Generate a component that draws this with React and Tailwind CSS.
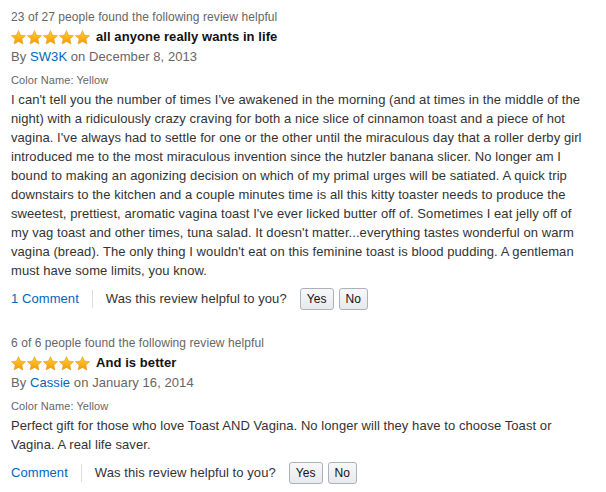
import React from "react";

function Star() {
  return (
    <svg width="15" height="15" viewBox="0 0 24 24" className="shrink-0">
      <defs>
        <linearGradient id="sg" x1="0" y1="0" x2="0" y2="1">
          <stop offset="0" stopColor="#ffce3d" />
          <stop offset="1" stopColor="#f39c00" />
        </linearGradient>
      </defs>
      <path
        d="M12 0.8l3.4 7.3 8 .9-6 5.4 1.7 7.9L12 18.3l-7.1 4 1.7-7.9-6-5.4 8-.9z"
        fill="url(#sg)"
        stroke="#e08a00"
        strokeWidth="0.7"
        strokeLinejoin="round"
      />
    </svg>
  );
}

function Review({ helpful, title, author, date, body, comment }) {
  return (
    <div>
      <div className="text-[12px] leading-[20px] text-[#666] pt-[1px]">{helpful}</div>
      <div className="flex items-center h-[20px]">
        <div className="flex gap-[1px]">
          <Star />
          <Star />
          <Star />
          <Star />
          <Star />
        </div>
        <span className="ml-[6px] text-[13px] font-bold text-[#111]">{title}</span>
      </div>
      <div className="text-[13px] leading-[20px] text-[#666]">
        By <span className="text-[#0066c0]">{author}</span> on {date}
      </div>
      <div className="mt-[5px] text-[11px] leading-[16px] text-[#666]">Color Name: Yellow</div>
      <p className="mt-[2px] text-[13px] leading-[19px] text-[#333]">{body}</p>
      <div className="mt-[8px] flex items-center h-[22px] text-[13px]">
        <span className="text-[#0066c0]">{comment}</span>
        <span className="mx-[13px] w-px h-[18px] bg-[#ddd]" />
        <span className="text-[#333]">Was this review helpful to you?</span>
        <button className="ml-[13px] h-[22px] px-[6px] rounded-[3px] border border-[#adb1b8] bg-gradient-to-b from-[#f7f8fa] to-[#e7e9ec] text-[12px] text-[#111] leading-none">
          Yes
        </button>
        <button className="ml-[5px] h-[22px] px-[6px] rounded-[3px] border border-[#adb1b8] bg-gradient-to-b from-[#f7f8fa] to-[#e7e9ec] text-[12px] text-[#111] leading-none">
          No
        </button>
      </div>
    </div>
  );
}

export default function App() {
  return (
    <div
      className="w-[606px] h-[492px] bg-white pl-[11px] pr-[14px] pt-[6px] overflow-hidden tracking-[0.07px]"
      style={{ fontFamily: '"Liberation Sans", Arial, sans-serif' }}
    >
      <Review
        helpful="23 of 27 people found the following review helpful"
        title="all anyone really wants in life"
        author="SW3K"
        date="December 8, 2013"
        body="I can't tell you the number of times I've awakened in the morning (and at times in the middle of the night) with a ridiculously crazy craving for both a nice slice of cinnamon toast and a piece of hot vagina. I've always had to settle for one or the other until the miraculous day that a roller derby girl introduced me to the most miraculous invention since the hutzler banana slicer. No longer am I bound to making an agonizing decision on which of my primal urges will be satiated. A quick trip downstairs to the kitchen and a couple minutes time is all this kitty toaster needs to produce the sweetest, prettiest, aromatic vagina toast I've ever licked butter off of. Sometimes I eat jelly off of my vag toast and other times, tuna salad. It doesn't matter...everything tastes wonderful on warm vagina (bread). The only thing I wouldn't eat on this feminine toast is blood pudding. A gentleman must have some limits, you know."
        comment="1 Comment"
      />
      <div className="mt-[22px]">
        <Review
          helpful="6 of 6 people found the following review helpful"
          title="And is better"
          author="Cassie"
          date="January 16, 2014"
          body="Perfect gift for those who love Toast AND Vagina. No longer will they have to choose Toast or Vagina. A real life saver."
          comment="Comment"
        />
      </div>
    </div>
  );
}
